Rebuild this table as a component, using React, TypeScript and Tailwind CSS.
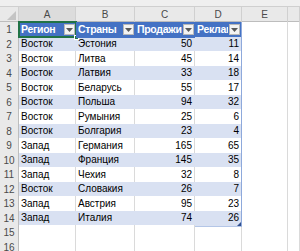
import type { FC } from "react";

type Rec = { region: string; country: string; sales: number; ads: number };

const data: Rec[] = [
  { region: "Восток", country: "Эстония", sales: 50, ads: 11 },
  { region: "Восток", country: "Литва", sales: 45, ads: 14 },
  { region: "Восток", country: "Латвия", sales: 33, ads: 18 },
  { region: "Восток", country: "Беларусь", sales: 55, ads: 17 },
  { region: "Восток", country: "Польша", sales: 94, ads: 32 },
  { region: "Восток", country: "Румыния", sales: 25, ads: 6 },
  { region: "Восток", country: "Болгария", sales: 23, ads: 4 },
  { region: "Запад", country: "Германия", sales: 165, ads: 65 },
  { region: "Запад", country: "Франция", sales: 145, ads: 35 },
  { region: "Запад", country: "Чехия", sales: 32, ads: 8 },
  { region: "Восток", country: "Словакия", sales: 26, ads: 7 },
  { region: "Запад", country: "Австрия", sales: 95, ads: 23 },
  { region: "Запад", country: "Италия", sales: 74, ads: 26 },
];

const gridCols = "grid grid-cols-[19px_57px_59px_60px_47px_46px_1fr]";
const rowHead =
  "flex items-center justify-center bg-[#e9e9e9] border-r border-b border-r-[#bdbdbd] border-b-[#d4d4d4] text-[10px] text-[#4a4a4a]";
const blank = "border-r border-b border-[#dadada] bg-white";

// filter dropdown arrow in table header
const FilterBtn: FC = () => (
  <span className="flex h-[11px] w-[11px] shrink-0 items-center justify-center border border-[#b8b8b8] bg-[#f3f3f3]">
    <svg width="7" height="4" viewBox="0 0 7 4">
      <path d="M0 0H7L3.5 4Z" fill="#595959" />
    </svg>
  </span>
);

const HeadCell: FC<{ label: string; last?: boolean; selected?: boolean }> = ({ label, last, selected }) => (
  <div
    className={`relative flex items-center gap-[1px] bg-[#4472c4] pl-[2px] pr-[1px] border-b border-b-[#4472c4] ${
      last ? "border-r border-r-[#8ea9db]" : ""
    }`}
  >
    <span className="min-w-0 flex-1 overflow-hidden whitespace-nowrap text-[10.5px] font-bold leading-none tracking-[-0.3px] text-white">
      {label}
    </span>
    <FilterBtn />
    {selected && (
      <>
        <div className="pointer-events-none absolute -inset-[1px] border-2 border-[#217346]" />
        <div className="absolute -bottom-[3px] -right-[3px] h-[5px] w-[5px] border border-white bg-[#217346]" />
      </>
    )}
  </div>
);

export default function App() {
  const totalRows = 16;

  return (
    <div className="h-[251px] w-[300px] overflow-hidden bg-white font-['Liberation_Sans',Arial,sans-serif]">
      {/* strip left from the formula bar */}
      <div className="h-[7px] border-b border-[#cfcfcf] bg-[#efefef]" />

      {/* column letters */}
      <div className={`${gridCols} h-[15px] bg-[#e9e9e9] border-b border-[#bdbdbd] text-[10px] text-[#4a4a4a]`}>
        <div className="relative border-r border-[#d0d0d0]">
          <svg className="absolute bottom-[2px] right-[2px]" width="9" height="9" viewBox="0 0 9 9">
            <path d="M9 0V9H0Z" fill="#c4c4c4" />
          </svg>
        </div>
        {["A", "B", "C", "D", "E", ""].map((c, i) => (
          <div
            key={i}
            className={`flex items-center justify-center border-r border-[#d0d0d0] ${i === 0 ? "bg-[#dcdcdc]" : ""}`}
          >
            {c}
          </div>
        ))}
      </div>

      {/* rows */}
      {Array.from({ length: totalRows }, (_, r) => {
        const num = r + 1;
        if (num === 1) {
          return (
            <div key={num} className={`${gridCols} h-[14.5px]`}>
              <div className={`${rowHead} bg-[#dcdcdc]`}>{num}</div>
              <HeadCell label="Регион" selected />
              <HeadCell label="Страны" />
              <HeadCell label="Продажи" />
              <HeadCell label="Реклама" last />
              <div className={blank} />
              <div className={blank} />
            </div>
          );
        }
        const rec = data[num - 2];
        if (!rec) {
          return (
            <div key={num} className={`${gridCols} h-[14.5px]`}>
              <div className={rowHead}>{num}</div>
              {[0, 1, 2, 3, 4, 5].map((c) => (
                <div key={c} className={blank} />
              ))}
            </div>
          );
        }
        const band = num % 2 === 0;
        const fill = band ? "bg-[#d9e1f2]" : "bg-white";
        const cell = `flex items-center overflow-hidden whitespace-nowrap px-[2px] text-[10px] leading-none text-black border-b border-b-[#b4c6e7] ${fill}`;
        const isLast = num === data.length + 1;
        return (
          <div key={num} className={`${gridCols} h-[14.5px]`}>
            <div className={rowHead}>{num}</div>
            <div className={`${cell} border-r ${band ? "border-r-[#d9e1f2]" : "border-r-[#dadada]"}`}>{rec.region}</div>
            <div className={`${cell} border-r ${band ? "border-r-[#d9e1f2]" : "border-r-[#dadada]"}`}>{rec.country}</div>
            <div className={`${cell} justify-end border-r ${band ? "border-r-[#d9e1f2]" : "border-r-[#dadada]"}`}>
              {rec.sales}
            </div>
            <div className={`${cell} relative justify-end border-r border-r-[#8ea9db]`}>
              {rec.ads}
              {isLast && (
                <svg className="absolute bottom-0 right-0" width="4" height="4" viewBox="0 0 4 4">
                  <path d="M4 0V4H0Z" fill="#2f4f8f" />
                </svg>
              )}
            </div>
            <div className={blank} />
            <div className={blank} />
          </div>
        );
      })}
    </div>
  );
}
